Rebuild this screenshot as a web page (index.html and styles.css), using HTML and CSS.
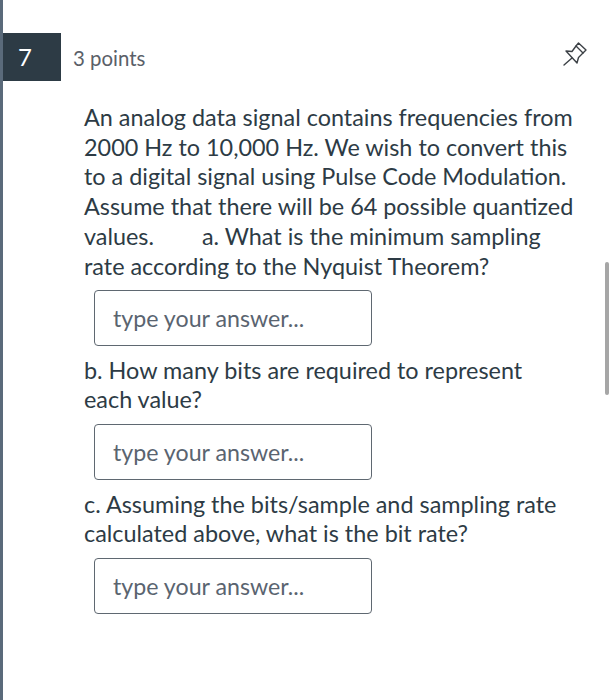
FILE: index.html
```html
<!DOCTYPE html>
<html lang="en">
<head>
  <meta charset="UTF-8">
  <title>Question 7</title>
  <link rel="stylesheet" href="styles.css">
</head>
<body>
  <div class="question">
    <div class="question-head">
      <div class="question-number">7</div>
      <div class="question-points">3 points</div>
      <svg class="pin-icon" width="30" height="30" viewBox="0 0 30 30" fill="none" stroke="#3c4146" stroke-width="1.4" stroke-linejoin="round" stroke-linecap="round">
        <path d="M4 25 L12 18"/>
        <path d="M6 11 L17 23 L18.5 17.5 L23 13 L26 10 L18.5 3 L16 6 L12 11.5 Z"/>
        <path d="M16 6 L23 13"/>
      </svg>
    </div>
    <div class="question-body">
      <p class="question-text">An analog data signal contains frequencies from 2000 Hz to 10,000 Hz. We wish to convert this to a digital signal using Pulse Code Modulation. Assume that there will be 64 possible quantized values.&nbsp;&nbsp;&nbsp;&nbsp;&nbsp;&nbsp;&nbsp; a. What is the minimum sampling rate according to the Nyquist Theorem?</p>
      <input class="answer" type="text" placeholder="type your answer...">
      <p class="question-text">b. How many bits are required to represent each value?</p>
      <input class="answer" type="text" placeholder="type your answer...">
      <p class="question-text">c. Assuming the bits/sample and sampling rate calculated above, what is the bit rate?</p>
      <input class="answer" type="text" placeholder="type your answer...">
    </div>
  </div>
  <div class="scroll-thumb"></div>
</body>
</html>
```

FILE: styles.css
```css
html, body {
  margin: 0;
  height: 700px;
  overflow: hidden;
  background: #fff;
}

body {
  font-family: Lato, sans-serif;
  color: #2d3b45;
  border-left: 3px solid #5a6a7a;
  position: relative;
}

.question-head {
  display: flex;
  align-items: center;
  padding-top: 33px;
  padding-right: 24px;
}

.question-number {
  width: 58px;
  height: 48px;
  background: #2d3b45;
  color: #fff;
  font-size: 24px;
  line-height: 48px;
  padding-left: 15px;
  box-sizing: border-box;
}

.question-points {
  flex: 1;
  margin-left: 12px;
  padding-top: 1px;
  font-size: 20.4px;
  color: #5a6068;
}

.pin-icon {
  margin-bottom: 4px;
}

.question-body {
  padding: 22px 39px 0 81px;
}

.question-text {
  margin: 0;
  font-size: 23.4px;
  line-height: 29.7px;
}

.answer {
  display: block;
  width: 278px;
  height: 56px;
  margin: 9px 0 9.5px 10px;
  padding: 0 18px;
  box-sizing: border-box;
  border: 1.5px solid #5f6871;
  border-radius: 4px;
  background: #fff;
  font-family: Lato, sans-serif;
  font-size: 23.2px;
  outline: none;
}

.answer::placeholder {
  color: #5a6470;
  opacity: 1;
}

.scroll-thumb {
  position: absolute;
  left: 602px;
  top: 262px;
  width: 4px;
  height: 133px;
  background: #a6a6a6;
  border-radius: 2px;
}
```
